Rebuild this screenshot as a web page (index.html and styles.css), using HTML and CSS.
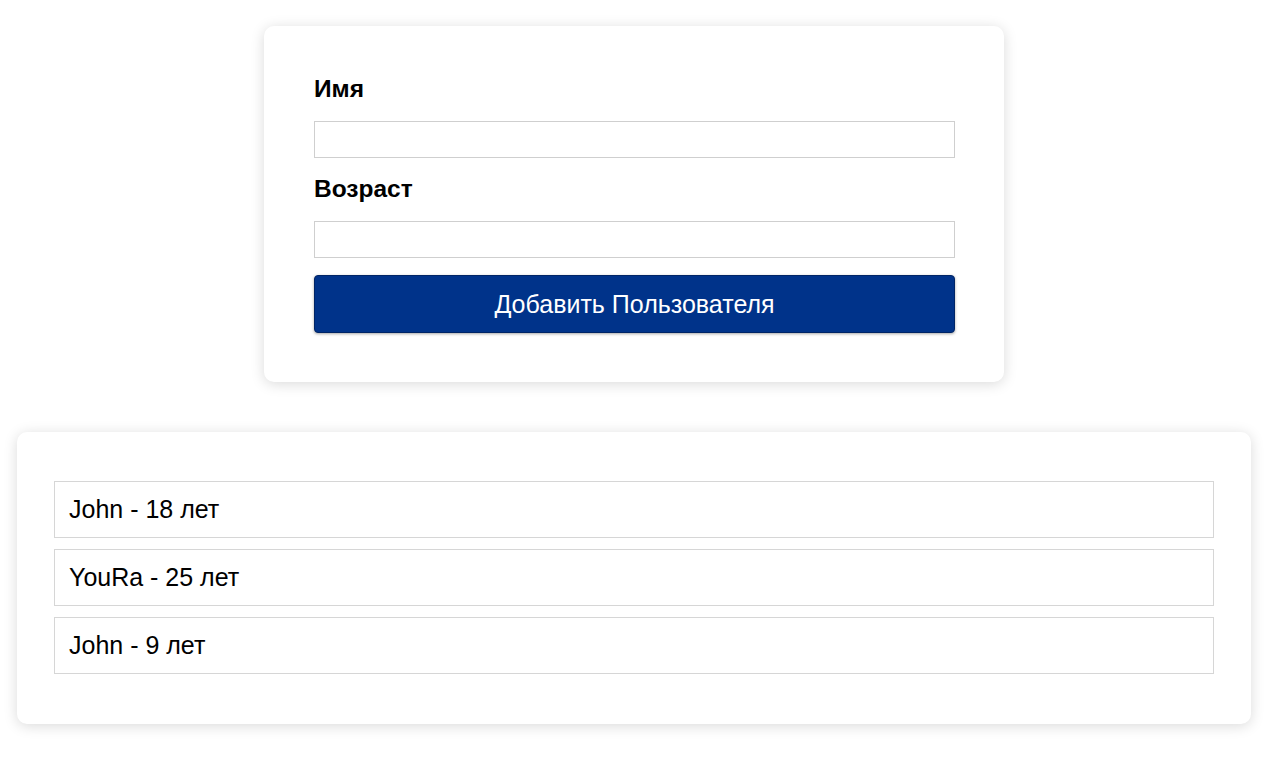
FILE: index.html
```html
<!DOCTYPE html>
<html lang="ru">
<head>
<meta charset="utf-8">
<title>Пользователи</title>
<link rel="stylesheet" href="styles.css">
</head>
<body>
<div class="page">
  <form class="card form-card">
    <label class="label" for="name">Имя</label>
    <input class="input" id="name" type="text">
    <label class="label" for="age">Возраст</label>
    <input class="input input-last" id="age" type="number">
    <button class="btn" type="button">Добавить Пользователя</button>
  </form>
  <div class="card list-card">
    <ul class="users">
      <li class="user">John - 18 лет</li>
      <li class="user">YouRa - 25 лет</li>
      <li class="user">John - 9 лет</li>
    </ul>
  </div>
</div>
</body>
</html>
```
FILE: styles.css
```css
* { box-sizing: border-box; }
html, body { margin: 0; padding: 0; background: #fff; }
body { font-family: "Liberation Sans", Arial, sans-serif; color: #000; }
.page {
  width: 1268px;
  padding: 26px 0 40px;
  display: flex;
  flex-direction: column;
  align-items: center;
  gap: 50px;
}
.card {
  background: #fff;
  border-radius: 10px;
  box-shadow: 0 2px 14px rgba(0, 0, 0, 0.15);
}
.form-card {
  width: 740px;
  padding: 51px 49px 49px 50px;
  display: flex;
  flex-direction: column;
}
.label {
  display: block;
  font-size: 24.5px;
  line-height: 24px;
  font-weight: bold;
  margin-bottom: 20px;
}
.input {
  display: block;
  width: 100%;
  height: 37px;
  border: 1px solid #cfcfcf;
  margin: 0 0 19px;
  padding: 0 8px;
  font: 20px "Liberation Sans", Arial, sans-serif;
  outline: none;
}
.input-last { margin-bottom: 17px; }
.btn {
  height: 58px;
  width: 100%;
  background: #00338a;
  color: #fff;
  border: 1px solid #002566;
  border-radius: 4px;
  box-shadow: 0 1px 3px rgba(0, 0, 0, 0.35);
  font: 25px "Liberation Sans", Arial, sans-serif;
  cursor: pointer;
}
.list-card {
  width: 1234px;
  padding: 49px 37px 50px;
}
.users {
  list-style: none;
  margin: 0;
  padding: 0;
  display: flex;
  flex-direction: column;
  gap: 11px;
}
.user {
  height: 57px;
  border: 1px solid #d6d6d6;
  padding: 0 14px;
  display: flex;
  align-items: center;
  font-size: 25px;
}
```
